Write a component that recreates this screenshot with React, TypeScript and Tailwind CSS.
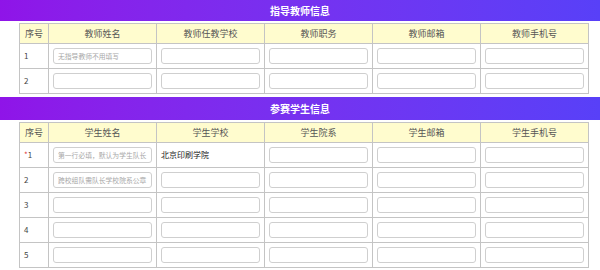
const font = { fontFamily: '"Noto Sans CJK SC", "Noto Sans", sans-serif' };

type Row = { no: string; required?: boolean; placeholder?: string; text?: string };

function SectionBar({ title, h }: { title: string; h: string }) {
  return (
    <div
      className={`flex w-full items-center justify-center bg-gradient-to-r from-[#8f14e8] to-[#5840f8] text-[10px] font-bold text-white ${h}`}
    >
      {title}
    </div>
  );
}

function Field({ placeholder }: { placeholder?: string }) {
  return (
    <input
      readOnly
      placeholder={placeholder}
      className="block h-[16px] w-full rounded-[3px] border border-[#cfcfcf] bg-white px-[4px] text-[6.8px] text-[#333] outline-none placeholder:text-[#a8a8a8]"
    />
  );
}

function InfoTable({ headers, rows }: { headers: string[]; rows: Row[] }) {
  return (
    <table className="ml-[19px] w-[568px] table-fixed border-collapse border border-[#a9a9a9] text-[9px] text-[#555]">
      <colgroup>
        <col className="w-[29px]" />
        {headers.map((h) => (
          <col key={h} className="w-[108px]" />
        ))}
      </colgroup>
      <thead>
        <tr className="h-[20px] bg-[#fffcce]">
          <th className="border border-[#c4c4c4] text-center font-normal">序号</th>
          {headers.map((h) => (
            <th key={h} className="border border-[#c4c4c4] text-center font-normal">
              {h}
            </th>
          ))}
        </tr>
      </thead>
      <tbody>
        {rows.map((r) => (
          <tr key={r.no} className="h-[25px]">
            <td className="border border-[#c4c4c4] pl-[4px] text-[8px] text-[#444]">
              {r.required && <span className="text-[#e03c3c]">*</span>}
              {r.no}
            </td>
            <td className="border border-[#c4c4c4] px-[4px]">
              <Field placeholder={r.placeholder} />
            </td>
            <td className="border border-[#c4c4c4] px-[4px]">
              {r.text ? <span className="text-[8px] text-[#222]">{r.text}</span> : <Field />}
            </td>
            {[0, 1, 2].map((i) => (
              <td key={i} className="border border-[#c4c4c4] px-[4px]">
                <Field />
              </td>
            ))}
          </tr>
        ))}
      </tbody>
    </table>
  );
}

export default function App() {
  return (
    <div className="h-[270px] w-[600px] overflow-hidden bg-white" style={font}>
      <SectionBar title="指导教师信息" h="h-[21px]" />
      <div className="mt-[2px]">
        <InfoTable
          headers={['教师姓名', '教师任教学校', '教师职务', '教师邮箱', '教师手机号']}
          rows={[{ no: '1', placeholder: '无指导教师不用填写' }, { no: '2' }]}
        />
      </div>
      <div className="mt-[3px]">
        <SectionBar title="参赛学生信息" h="h-[23px]" />
      </div>
      <div className="mt-[2px]">
        <InfoTable
          headers={['学生姓名', '学生学校', '学生院系', '学生邮箱', '学生手机号']}
          rows={[
            { no: '1', required: true, placeholder: '第一行必填，默认为学生队长', text: '北京印刷学院' },
            { no: '2', placeholder: '跨校组队需队长学校院系公章' },
            { no: '3' },
            { no: '4' },
            { no: '5' },
          ]}
        />
      </div>
      <div className="mt-[2px]">
        <SectionBar title="" h="h-[23px]" />
      </div>
    </div>
  );
}
